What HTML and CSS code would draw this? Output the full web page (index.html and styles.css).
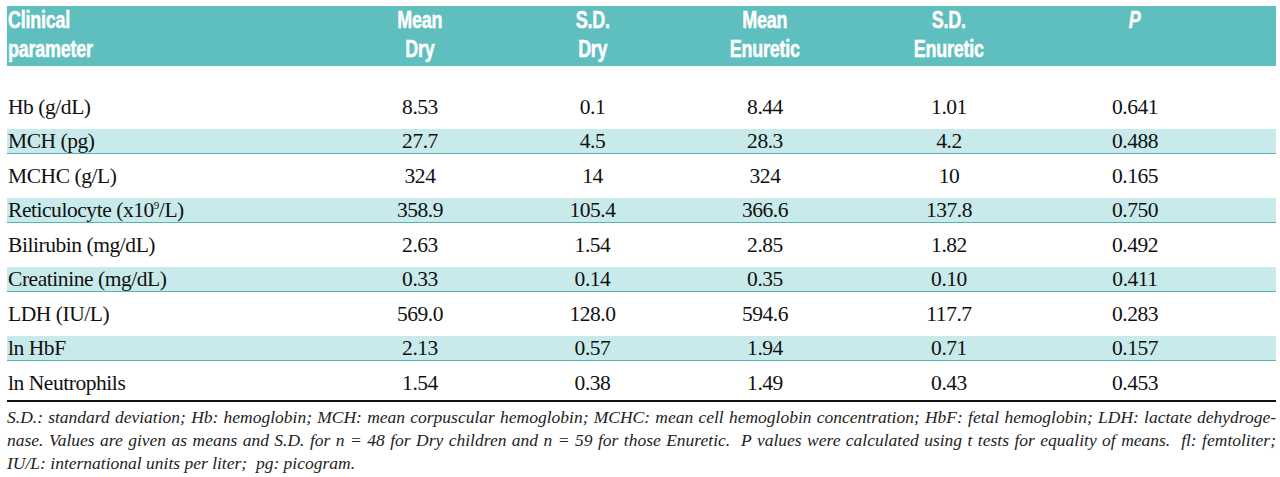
FILE: index.html
```
<!DOCTYPE html>
<html lang="en">
<head>
<meta charset="utf-8">
<title>Clinical parameters</title>
<link rel="stylesheet" href="styles.css">
</head>
<body>
<div class="page">
  <table class="data">
    <colgroup>
      <col class="c1"><col class="c2"><col class="c3"><col class="c4"><col class="c5"><col class="c6">
    </colgroup>
    <thead>
      <tr>
        <th class="lbl"><span class="h">Clinical<br>parameter</span></th>
        <th><span class="h">Mean<br>Dry</span></th>
        <th><span class="h">S.D.<br>Dry</span></th>
        <th><span class="h">Mean<br>Enuretic</span></th>
        <th><span class="h">S.D.<br>Enuretic</span></th>
        <th class="pcol"><span class="h"><i>P</i></span></th>
      </tr>
    </thead>
    <tbody>
      <tr class="gap"><td colspan="6"></td></tr>
      <tr><td class="lbl">Hb (g/dL)</td><td>8.53</td><td>0.1</td><td>8.44</td><td>1.01</td><td class="pcol">0.641</td></tr>
      <tr class="band"><td class="lbl">MCH (pg)</td><td>27.7</td><td>4.5</td><td>28.3</td><td>4.2</td><td class="pcol">0.488</td></tr>
      <tr><td class="lbl">MCHC (g/L)</td><td>324</td><td>14</td><td>324</td><td>10</td><td class="pcol">0.165</td></tr>
      <tr class="band"><td class="lbl">Reticulocyte (x10<sup>9</sup>/L)</td><td>358.9</td><td>105.4</td><td>366.6</td><td>137.8</td><td class="pcol">0.750</td></tr>
      <tr><td class="lbl">Bilirubin (mg/dL)</td><td>2.63</td><td>1.54</td><td>2.85</td><td>1.82</td><td class="pcol">0.492</td></tr>
      <tr class="band"><td class="lbl">Creatinine (mg/dL)</td><td>0.33</td><td>0.14</td><td>0.35</td><td>0.10</td><td class="pcol">0.411</td></tr>
      <tr><td class="lbl">LDH (IU/L)</td><td>569.0</td><td>128.0</td><td>594.6</td><td>117.7</td><td class="pcol">0.283</td></tr>
      <tr class="band"><td class="lbl">ln HbF</td><td>2.13</td><td>0.57</td><td>1.94</td><td>0.71</td><td class="pcol">0.157</td></tr>
      <tr class="last"><td class="lbl">ln Neutrophils</td><td>1.54</td><td>0.38</td><td>1.49</td><td>0.43</td><td class="pcol">0.453</td></tr>
    </tbody>
  </table>
  <div class="notes">
    <div class="line just">S.D.: standard deviation; Hb: hemoglobin; MCH: mean corpuscular hemoglobin; MCHC: mean cell hemoglobin concentration; HbF: fetal hemoglobin; LDH: lactate dehydroge-</div>
    <div class="line just">nase. Values are given as means and S.D. for n = 48 for Dry children and n = 59 for those Enuretic.&nbsp; P values were calculated using t tests for equality of means.&nbsp; fl: femtoliter;</div>
    <div class="line">IU/L: international units per liter;&nbsp; pg: picogram.</div>
  </div>
</div>
</body>
</html>
```
FILE: styles.css
```
html, body {
  margin: 0;
  padding: 0;
  background: #ffffff;
}

.page {
  padding: 6px 4px 0 7px;
  width: 1269px;
}

.data {
  width: 1269px;
  border-collapse: collapse;
  table-layout: fixed;
  font-family: "Liberation Serif", "Times New Roman", serif;
  font-size: 21.5px;
  color: #111;
}

.c1 { width: 327px; }
.c2 { width: 172px; }
.c3 { width: 173px; }
.c4 { width: 172px; }
.c5 { width: 196px; }
.c6 { width: 229px; }

.data th {
  background: #5fbebe;
  color: #ffffff;
  font-family: "Liberation Sans", Arial, sans-serif;
  font-weight: bold;
  font-size: 23px;
  line-height: 28.5px;
  height: 60px;
  padding: 0;
  vertical-align: top;
  text-align: center;
}

.data th .h {
  display: inline-block;
  transform: scaleX(0.78);
  transform-origin: 50% 0;
  letter-spacing: -0.3px;
  -webkit-text-stroke: 0.5px #ffffff;
}

.data th.lbl {
  text-align: left;
  padding-left: 1px;
}

.data th.lbl .h {
  transform-origin: 0 0;
}

.data .pcol {
  padding-right: 53px;
}

.data td {
  padding: 0;
  height: 34.5px;
  text-align: center;
  vertical-align: middle;
  line-height: 24px;
  letter-spacing: -0.45px;
}

.data td.lbl {
  text-align: left;
  padding-left: 1px;
}

.data tr.gap td {
  height: 23.5px;
}

.data tr.band td {
  background: linear-gradient(to bottom,
    #ffffff 0, #ffffff 5px,
    #c8eaeb 5px, #c8eaeb 29px,
    #58b3b3 29px, #58b3b3 30px,
    #ffffff 30px);
}

.data tr.last td {
  border-bottom: 2px solid #111;
}

.data sup {
  font-size: 11px;
  line-height: 0;
  vertical-align: 8px;
}

.notes {
  margin-top: 4px;
  font-family: "Liberation Serif", "Times New Roman", serif;
  font-style: italic;
  font-size: 17.5px;
  line-height: 23px;
  color: #222;
}

.notes .line.just {
  text-align: justify;
  text-align-last: justify;
}
```
